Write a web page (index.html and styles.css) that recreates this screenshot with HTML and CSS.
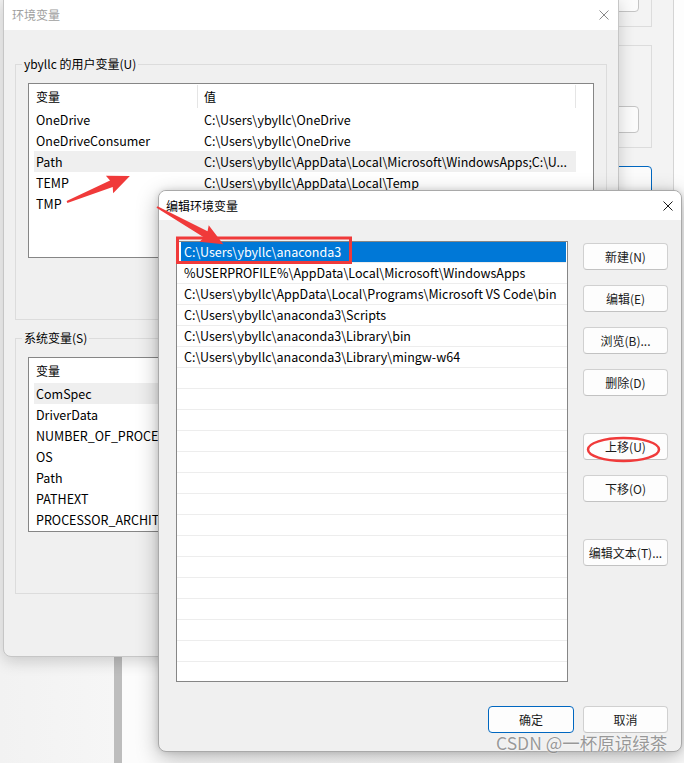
FILE: index.html
```html
<!DOCTYPE html>
<html lang="zh-CN">
<head>
<meta charset="utf-8">
<title>编辑环境变量</title>
<link rel="stylesheet" href="styles.css">
</head>
<body>
<div class="desk">

  <div class="win win-sys">
    <div class="sys-group sys-group-a"><div class="sys-btn"></div></div>
    <div class="sys-group sys-group-b"><div class="sys-btn"></div></div>
    <div class="sys-btn sys-btn-default"></div>
  </div>

  <div class="strip"></div>

  <div class="win win-env">
    <div class="titlebar">
      <span class="title title-inactive">环境变量</span>
      <svg class="close close-inactive" width="10" height="10" viewBox="0 0 10 10"><path d="M0.5 0.5 L9.5 9.5 M9.5 0.5 L0.5 9.5"/></svg>
    </div>
    <div class="env-body">
      <fieldset class="group">
        <legend>ybyllc 的用户变量(U)</legend>
        <div class="lv">
          <div class="lv-head"><span class="c1">变量</span><span class="c2">值</span></div>
          <div class="lv-row"><span class="c1">OneDrive</span><span class="c2">C:\Users\ybyllc\OneDrive</span></div>
          <div class="lv-row"><span class="c1">OneDriveConsumer</span><span class="c2">C:\Users\ybyllc\OneDrive</span></div>
          <div class="lv-row hl"><span class="c1">Path</span><span class="c2">C:\Users\ybyllc\AppData\Local\Microsoft\WindowsApps;C:\U...</span></div>
          <div class="lv-row"><span class="c1">TEMP</span><span class="c2">C:\Users\ybyllc\AppData\Local\Temp</span></div>
          <div class="lv-row"><span class="c1">TMP</span><span class="c2"></span></div>
        </div>
      </fieldset>
      <fieldset class="group group-sys">
        <legend>系统变量(S)</legend>
        <div class="lv">
          <div class="lv-head"><span class="c1">变量</span><span class="c2"></span></div>
          <div class="lv-row hl"><span class="c1">ComSpec</span><span class="c2"></span></div>
          <div class="lv-row"><span class="c1">DriverData</span><span class="c2"></span></div>
          <div class="lv-row"><span class="c1">NUMBER_OF_PROCESSORS</span><span class="c2"></span></div>
          <div class="lv-row"><span class="c1">OS</span><span class="c2"></span></div>
          <div class="lv-row"><span class="c1">Path</span><span class="c2"></span></div>
          <div class="lv-row"><span class="c1">PATHEXT</span><span class="c2"></span></div>
          <div class="lv-row"><span class="c1">PROCESSOR_ARCHITECTURE</span><span class="c2"></span></div>
        </div>
      </fieldset>
    </div>
  </div>

  <div class="win win-edit">
    <div class="titlebar titlebar-edit">
      <span class="title">编辑环境变量</span>
      <svg class="close" width="10" height="10" viewBox="0 0 10 10"><path d="M0.5 0.5 L9.5 9.5 M9.5 0.5 L0.5 9.5"/></svg>
    </div>
    <div class="edit-body">
      <div class="edit-main">
        <div class="lb">
          <div class="lb-row sel">C:\Users\ybyllc\anaconda3</div>
          <div class="lb-row">%USERPROFILE%\AppData\Local\Microsoft\WindowsApps</div>
          <div class="lb-row">C:\Users\ybyllc\AppData\Local\Programs\Microsoft VS Code\bin</div>
          <div class="lb-row">C:\Users\ybyllc\anaconda3\Scripts</div>
          <div class="lb-row">C:\Users\ybyllc\anaconda3\Library\bin</div>
          <div class="lb-row">C:\Users\ybyllc\anaconda3\Library\mingw-w64</div>
          <div class="lb-row"></div>
          <div class="lb-row"></div>
          <div class="lb-row"></div>
          <div class="lb-row"></div>
          <div class="lb-row"></div>
          <div class="lb-row"></div>
          <div class="lb-row"></div>
          <div class="lb-row"></div>
          <div class="lb-row"></div>
          <div class="lb-row"></div>
          <div class="lb-row"></div>
          <div class="lb-row"></div>
          <div class="lb-row"></div>
          <div class="lb-row"></div>
          <div class="lb-row"></div>
        </div>
        <div class="btn-col">
          <button class="btn">新建(N)</button>
          <button class="btn">编辑(E)</button>
          <button class="btn">浏览(B)...</button>
          <button class="btn">删除(D)</button>
          <button class="btn btn-gap">上移(U)</button>
          <button class="btn">下移(O)</button>
          <button class="btn btn-gap">编辑文本(T)...</button>
        </div>
      </div>
      <div class="edit-foot">
        <button class="btn btn-ok">确定</button>
        <button class="btn">取消</button>
      </div>
    </div>
  </div>

  <svg class="marks" width="684" height="763" viewBox="0 0 684 763">
    <polygon transform="translate(67 202) rotate(-22.4)" points="0,-1 48,-3.5 46,-9.5 68,0 46,9.5 48,3.5 0,1"/>
    <polygon transform="translate(157 207) rotate(29.3)" points="0,-1 56,-3.5 54,-9.5 76,0 54,9.5 56,3.5 0,1"/>
    <rect x="177.5" y="238" width="173" height="24.5"/>
    <ellipse cx="623.5" cy="449.5" rx="35.5" ry="11.5"/>
  </svg>

  <div class="watermark">CSDN @一杯原谅绿茶</div>
</div>
</body>
</html>
```

FILE: styles.css
```css
* { box-sizing: border-box; }
html, body { margin: 0; padding: 0; }
body {
  width: 684px;
  height: 763px;
  overflow: hidden;
  background: #f8f8f8;
  font-family: "Noto Sans CJK SC", "Microsoft YaHei", sans-serif;
  font-size: 12px;
  color: #000;
}
.desk {
  position: relative;
  width: 684px;
  height: 763px;
  overflow: hidden;
  background: linear-gradient(to right, #f2f2f2 0, #f6f6f6 114px, #fcfcfc 122px, #fdfdfd 100%);
}

/* generic window */
.win { position: absolute; }

/* third background window (right edge) */
.win-sys {
  left: 480px;
  top: -40px;
  width: 194px;
  height: 300px;
  background: #f3f3f3;
  border-right: 1px solid #d4d4d4;
  display: flex;
  flex-direction: column;
  align-items: flex-end;
  padding: 20px 21px 0 0;
}
.sys-group {
  width: 130px;
  border: 1px solid #dcdcdc;
  display: flex;
  justify-content: flex-end;
}
.sys-group-a { height: 47px; padding: 4px 12px 0 0; }
.sys-group-b { height: 103px; margin-top: 18px; padding: 60px 12px 0 0; }
.sys-btn {
  width: 90px;
  height: 27px;
  background: #fbfbfb;
  border: 1px solid #c4c4c4;
  border-radius: 4px;
}
.sys-btn-default {
  width: 130px;
  height: 40px;
  margin-top: 18px;
  border: 1px solid #0067c0;
}

.strip {
  position: absolute;
  left: 114px;
  top: 650px;
  width: 8px;
  height: 113px;
  background: #bdbdbd;
}

/* environment variables window */
.win-env {
  left: 3px;
  top: -1px;
  width: 616px;
  height: 658px;
  background: #f0f0f0;
  border: 1px solid #c6c6c6;
  border-radius: 0 0 8px 8px;
  box-shadow: 0 4px 16px rgba(0, 0, 0, 0.18);
  overflow: hidden;
}
.titlebar {
  height: 30px;
  background: #fff;
  display: flex;
  align-items: center;
  justify-content: space-between;
  padding: 0 9px 0 8px;
}
.title { line-height: 16px; }
.title-inactive { color: #a0a0a0; }
.close path { stroke: #1a1a1a; stroke-width: 1; fill: none; }
.close-inactive path { stroke: #8a8a8a; }

.env-body { padding: 0 11px; }
.group {
  margin: 26px 0 0;
  border: 1px solid #dcdcdc;
  padding: 11px 12px 61px 12px;
  min-width: 0;
}
.group-sys { margin-top: 10px; }
.group legend {
  padding: 0 2px;
  margin-left: -6px;
  line-height: 16px;
  color: #000;
}
.lv {
  height: 175px;
  background: #fff;
  border: 1px solid #868686;
  padding-left: 5px;
  overflow: hidden;
}
.lv-head {
  height: 25px;
  display: flex;
  padding-top: 1px;
}
.lv-head span {
  height: 23px;
  line-height: 23px;
  border-right: 1px solid #e5e5e5;
}
.lv-row {
  height: 21px;
  line-height: 21px;
  display: flex;
  width: 542px;
  font-size: 12.5px;
}
.lv-row.hl { background: #efefef; }
.c1, .c2 {
  flex: none;
  white-space: nowrap;
}
.c1 { width: 164px; padding-left: 2px; overflow: visible; }
.c2 { width: 378px; padding-left: 6px; overflow: hidden; }

/* edit dialog */
.win-edit {
  left: 158px;
  top: 190px;
  width: 524px;
  height: 562px;
  background: #f0f0f0;
  border: 1px solid #a9a9a9;
  border-radius: 8px;
  box-shadow: 0 6px 22px rgba(0, 0, 0, 0.28), 0 0 6px rgba(0, 0, 0, 0.12);
  overflow: hidden;
}
.titlebar-edit {
  height: 29px;
  padding: 0 8px 0 7px;
}
.edit-body {
  padding: 21px 13px 0 17px;
  display: flex;
  flex-direction: column;
}
.edit-main { display: flex; }
.lb {
  width: 392px;
  height: 441px;
  background: #fff;
  border: 1px solid #868686;
  overflow: hidden;
}
.lb-row {
  height: 21px;
  line-height: 20px;
  border-bottom: 1px solid #ededed;
  padding-left: 7px;
  white-space: nowrap;
  font-size: 12.5px;
}
.lb-row.sel {
  background: #0078d7;
  color: #fff;
  margin: 0 1px 0 4px;
  padding-left: 3px;
}
.btn-col {
  margin-left: 15px;
  padding-top: 2px;
  display: flex;
  flex-direction: column;
  gap: 15px;
}
.btn {
  width: 85px;
  height: 27px;
  padding: 0;
  background: #fdfdfd;
  border: 1px solid #d0d0d0;
  border-bottom-color: #c2c2c2;
  border-radius: 4px;
  font-family: inherit;
  font-size: 12px;
  color: #1b1b1b;
  line-height: 25px;
  text-align: center;
  white-space: nowrap;
}
.btn-gap { margin-top: 22px; }
.edit-foot {
  margin-top: 24px;
  display: flex;
  justify-content: flex-end;
  gap: 9px;
}
.btn-ok {
  width: 86px;
  border-color: #0067c0;
}

/* annotations */
.marks {
  position: absolute;
  left: 0;
  top: 0;
  pointer-events: none;
}
.marks polygon { fill: #f03a3a; }
.marks rect, .marks ellipse {
  fill: none;
  stroke: #f03a3a;
  stroke-width: 3;
}
.marks ellipse { stroke-width: 2.5; }

.watermark {
  position: absolute;
  left: 496px;
  top: 731px;
  font-size: 17.5px;
  line-height: 24px;
  color: rgba(120, 120, 120, 0.75);
  text-shadow: 0 0 2px rgba(255, 255, 255, 0.9);
  white-space: nowrap;
}
```
